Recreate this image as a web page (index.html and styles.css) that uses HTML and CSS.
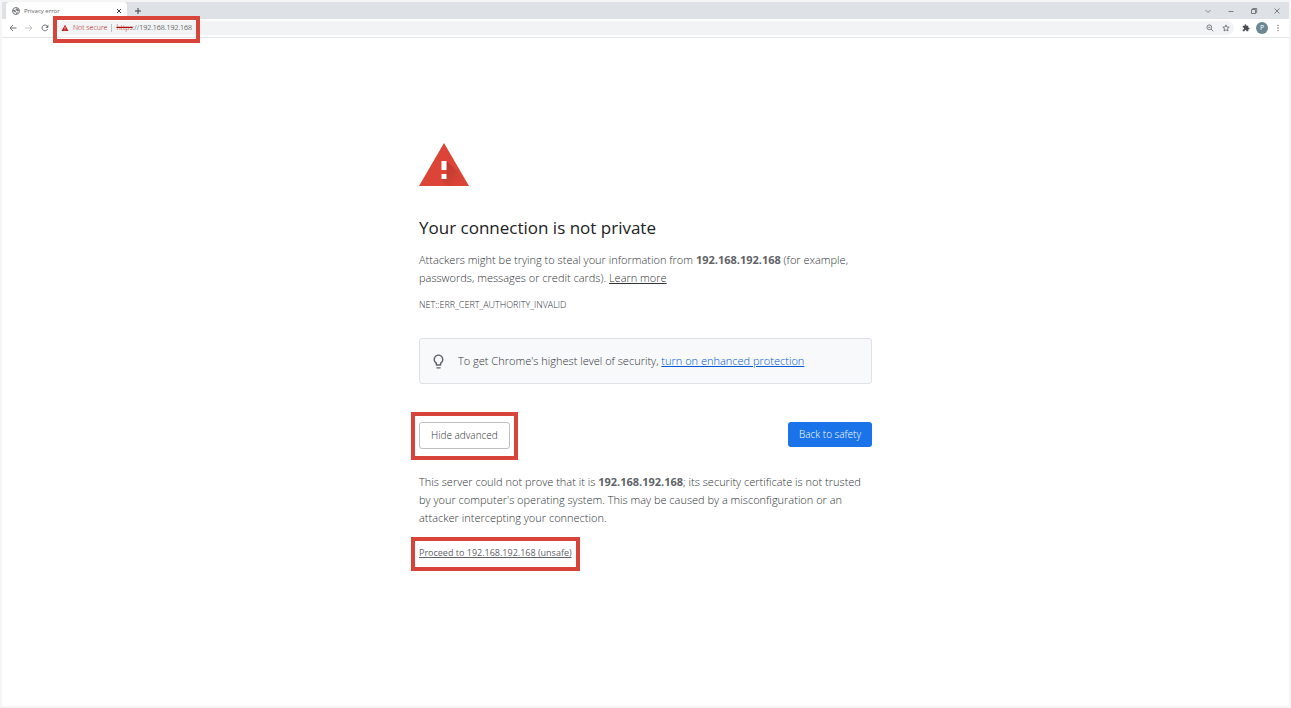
FILE: index.html
```html
<!DOCTYPE html>
<html lang="en">
<head>
    <meta charset="UTF-8">
    <meta name="viewport" content="width=device-width, initial-scale=1.0">
    <title>Privacy error</title>
    <link rel="stylesheet" href="styles.css">
</head>
<body>
    <header class="tabs">
        <div class="tab">
            <svg class="globe" viewBox="0 0 16 16"><circle cx="8" cy="8" r="7" fill="#fff" stroke="#777a7e" stroke-width="2"/><path d="M2 5l4 1 2 3-1 2-3-1-2-3zM8 2l5 2 1 4-3 1-2-2-3-1 3-2zM9 10l3 1-2 3-2 0z" fill="#777a7e"/></svg>
            <span class="tab-title">Privacy error</span>
            <button class="icon-btn" aria-label="Close tab"><svg class="icon-s" viewBox="0 0 8 8"><path d="M2 2l4 4M6 2l-4 4" stroke="#3c4043" stroke-width="1"/></svg></button>
        </div>
        <button class="icon-btn new-tab" aria-label="New tab"><svg class="icon-s" viewBox="0 0 8 8"><path d="M4 1v6M1 4h6" stroke="#3c4043" stroke-width="1"/></svg></button>
        <div class="window-btns">
            <button class="icon-btn" aria-label="Search tabs"><svg class="icon-s" viewBox="0 0 8 8"><path d="M1.500 3L4 5.500 6.500 3" fill="none" stroke="#5f6368" stroke-width=".7"/></svg></button>
            <button class="icon-btn" aria-label="Minimize"><svg class="icon-s" viewBox="0 0 8 8"><path d="M1.500 4.500h5" stroke="#5f6368" stroke-width=".8"/></svg></button>
            <button class="icon-btn" aria-label="Restore"><svg class="icon-s" viewBox="0 0 8 8"><path d="M1.500 2.500h4v4h-4zM2.800 2.500v-1h3.900v4H5.500" fill="none" stroke="#5f6368" stroke-width=".8"/></svg></button>
            <button class="icon-btn" aria-label="Close"><svg class="icon-s" viewBox="0 0 8 8"><path d="M1.500 1.500l5 5M6.500 1.500l-5 5" stroke="#5f6368" stroke-width=".8"/></svg></button>
        </div>
    </header>

    <nav class="toolbar">
        <div class="nav-btns">
            <button class="icon-btn" aria-label="Back"><svg class="icon-s" viewBox="0 0 8 8"><path d="M7.500 4H1M4 1L1 4l3 3" fill="none" stroke="#5f6368" stroke-width=".9"/></svg></button>
            <button class="icon-btn" aria-label="Forward"><svg class="icon-s" viewBox="0 0 8 8"><path d="M.5 4H7M4 1l3 3-3 3" fill="none" stroke="#babcbe" stroke-width=".9"/></svg></button>
            <button class="icon-btn" aria-label="Reload"><svg class="icon-s" viewBox="0 0 8 8"><path d="M6.500 5.200A2.900 2.900 0 1 1 6.300 2.200" fill="none" stroke="#5f6368" stroke-width=".9"/><path d="M7.300.8v2.900H4.400z" fill="#5f6368"/></svg></button>
        </div>
        <div class="address">
            <div class="marked marked-address">
                <svg class="icon-s" viewBox="0 0 8 8"><path d="M4 .8L7.500 7h-7z" fill="#c5221f"/><path d="M4 3v2M4 5.500v.8" stroke="#f1f3f4" stroke-width=".7"/></svg>
                <span class="not-secure">Not secure</span>
                <span class="url"><s>https</s>://<b>192.168.192.168</b></span>
            </div>
            <div class="address-btns">
                <button class="icon-btn" aria-label="Zoom"><svg class="icon-s" viewBox="0 0 8 8"><circle cx="3.300" cy="3.300" r="2.400" fill="none" stroke="#5f6368" stroke-width=".8"/><path d="M5 5l2.300 2.300M2.200 3.300h2.200" stroke="#5f6368" stroke-width=".8"/></svg></button>
                <button class="icon-btn" aria-label="Bookmark"><svg class="icon-s" viewBox="0 0 8 8"><path d="M4 .9l.9 2.100 2.300.2-1.700 1.500.5 2.300-2-1.200L2 7l.5-2.300L.8 3.200l2.300-.2z" fill="none" stroke="#5f6368" stroke-width=".8"/></svg></button>
            </div>
        </div>
        <div class="menu-btns">
            <button class="icon-btn" aria-label="Extensions"><svg class="icon-s" viewBox="0 0 24 24"><path d="M20.500 11H19V7a2 2 0 0 0-2-2h-4V3.500a2.500 2.500 0 0 0-5 0V5H4a2 2 0 0 0-2 2v3.800h1.500a2.700 2.700 0 0 1 0 5.400H2V20a2 2 0 0 0 2 2h3.800v-1.500a2.700 2.700 0 0 1 5.400 0V22H17a2 2 0 0 0 2-2v-4h1.500a2.500 2.500 0 0 0 0-5z" fill="#4a4d51"/></svg></button>
            <button class="avatar">P</button>
            <button class="icon-btn" aria-label="Menu"><svg class="icon-s" viewBox="0 0 8 8"><g fill="#5f6368"><circle cx="4" cy="1.400" r=".7"/><circle cx="4" cy="4" r=".7"/><circle cx="4" cy="6.600" r=".7"/></g></svg></button>
        </div>
    </nav>

    <main class="warning">
        <svg class="warning-icon" viewBox="0 0 50 43">
            <defs>
                <linearGradient id="shade" x1="0" y1="0" x2="1" y2="1">
                    <stop offset="0" stop-color="#a52f25" stop-opacity=".7"/>
                    <stop offset=".8" stop-color="#a52f25" stop-opacity="0"/>
                </linearGradient>
            </defs>
            <path d="M25 0l25 43H0z" fill="#db4437"/>
            <path d="M27.500 18L38 28.500 46.700 43H29l-6.500-6.500 5-1z" fill="url(#shade)"/>
            <path d="M22.500 18h5v9h-5zM22.500 31h5v5h-5z" fill="#fff"/>
        </svg>
        <h1>Your connection is not private</h1>
        <p>Attackers might be trying to steal your information from <strong>192.168.192.168</strong> (for example, passwords, messages or credit cards). <a href="#">Learn more</a></p>
        <div class="error-code">NET::ERR_CERT_AUTHORITY_INVALID</div>

        <div class="tip">
            <svg class="bulb" viewBox="0 0 24 24"><path d="M9 21c0 .55.45 1 1 1h4c.55 0 1-.45 1-1v-1H9v1zm3-19C8.140 2 5 5.140 5 9c0 2.380 1.190 4.470 3 5.740V17c0 .55.45 1 1 1h6c.55 0 1-.45 1-1v-2.260c1.810-1.270 3-3.360 3-5.740 0-3.860-3.140-7-7-7zm2.850 11.100l-.85.6V16h-4v-2.300l-.85-.6A4.997 4.997 0 0 1 7 9c0-2.760 2.240-5 5-5s5 2.240 5 5c0 1.630-.8 3.160-2.150 4.100z" fill="#5f6368"/></svg>
            <span>To get Chrome's highest level of security, <a class="tip-link" href="#">turn on enhanced protection</a></span>
        </div>

        <div class="buttons">
            <div class="marked marked-button"><button class="btn btn-advanced">Hide advanced</button></div>
            <button class="btn btn-safety">Back to safety</button>
        </div>

        <p>This server could not prove that it is <strong>192.168.192.168</strong>; its security certificate is not trusted by your computer's operating system. This may be caused by a misconfiguration or an attacker intercepting your connection.</p>
        <div class="marked marked-link"><a class="proceed" href="#">Proceed to 192.168.192.168 (unsafe)</a></div>
    </main>
</body>
</html>
```
FILE: styles.css
```css
* {
    box-sizing: border-box;
}
body {
    margin: 0;
    min-height: 100vh;
    border: 2px solid #f5f5f5;
    background-color: #fff;
    color: #303338;
    font-family: "Open Sans", "Noto Sans", sans-serif;
    font-size: 11px;
    font-weight: 300;
    line-height: 18px;
}
button {
    font-family: inherit;
    cursor: pointer;
}
svg {
    display: block;
    flex: none;
}
a {
    color: inherit;
}
strong {
    color: #5f6368;
    font-weight: bold;
}

/* browser bar */
.tabs {
    display: flex;
    align-items: center;
    height: 17px;
    padding-left: 4px;
    background-color: #dee1e6;
}
.tab {
    display: flex;
    align-items: center;
    gap: 4px;
    width: 121px;
    height: 17px;
    padding: 0 4px 0 6px;
    border-radius: 4px 4px 0 0;
    background-color: #fff;
}
.tab-title {
    flex: 1;
    color: #5f6368;
    font-size: 6px;
    font-weight: normal;
}
.globe {
    width: 8px;
    height: 8px;
}
.icon-s {
    width: 8px;
    height: 8px;
}
.icon-btn {
    padding: 0;
    border: 0;
    background: none;
}
.new-tab {
    margin-left: 7px;
}
.window-btns {
    display: flex;
    gap: 15px;
    margin-left: auto;
    padding-right: 8px;
}
.toolbar {
    display: flex;
    align-items: center;
    gap: 8px;
    height: 19px;
    padding: 0 7px;
    border-bottom: 1px solid #e4e6e8;
}
.nav-btns {
    display: flex;
    gap: 8px;
}
.address {
    flex: 1;
    display: flex;
    align-items: center;
    justify-content: space-between;
    height: 14px;
    padding: 0 4px;
    border-radius: 7px;
    background-color: #f1f3f4;
}
.address-btns {
    display: flex;
    gap: 8px;
}
.menu-btns {
    display: flex;
    align-items: center;
    gap: 6px;
}
.marked-address {
    display: flex;
    align-items: center;
    gap: 4px;
    font-size: 7px;
    line-height: 12px;
}
.not-secure {
    color: #b00d0a;
}
.url {
    padding-left: 4px;
    border-left: 1px solid #bdc1c6;
    line-height: 8px;
}
.url s {
    color: #b00d0a;
}
.url b {
    color: #000;
    font-weight: inherit;
}
.avatar {
    width: 12px;
    height: 12px;
    padding: 0;
    border: 0;
    border-radius: 50%;
    background-color: #6b8793;
    color: #fff;
    font-size: 7px;
    line-height: 12px;
}

/* red frames over the page */
.marked {
    position: relative;
}
.marked::after {
    content: "";
    position: absolute;
    border: 4px solid #d8433a;
    pointer-events: none;
}
.marked-address::after {
    inset: -6px -8px -9px;
}
.marked-button::after {
    inset: -10px -8px -11px;
}
.marked-link::after {
    inset: -6px -8px -9px;
}

/* warning */
.warning {
    max-width: 453px;
    margin: 0 auto;
    padding: 105px 0 40px;
}
.warning-icon {
    width: 50px;
    height: 43px;
}
h1 {
    margin: 30px 0 11px;
    color: #202124;
    font-size: 17px;
    font-weight: normal;
    line-height: 24px;
}
p {
    margin: 0;
}
.error-code {
    margin-top: 12px;
    font-size: 9px;
    line-height: 12px;
}
.tip {
    display: flex;
    align-items: center;
    gap: 11px;
    margin: 27px 0 38px;
    padding: 13px 10px;
    border: 1px solid #dfe1e5;
    border-radius: 3px;
    background-color: #f8f9fb;
}
.bulb {
    width: 17px;
    height: 17px;
}
.tip-link {
    color: #0058d6;
}
.buttons {
    display: flex;
    align-items: flex-start;
    justify-content: space-between;
    margin-bottom: 24px;
}
.btn {
    display: block;
    padding: 0 11px;
    border: 0;
    border-radius: 3px;
    font-size: 10px;
    font-weight: 300;
    line-height: 25px;
}
.btn-advanced {
    border: 1px solid #bdc1c6;
    background-color: #fff;
    color: #303338;
}
.btn-safety {
    background-color: #1a73e8;
    color: #fff;
}
.marked-link {
    width: fit-content;
    margin-top: 16px;
}
.proceed {
    color: #5f6368;
    font-size: 9px;
    font-weight: normal;
}
```
